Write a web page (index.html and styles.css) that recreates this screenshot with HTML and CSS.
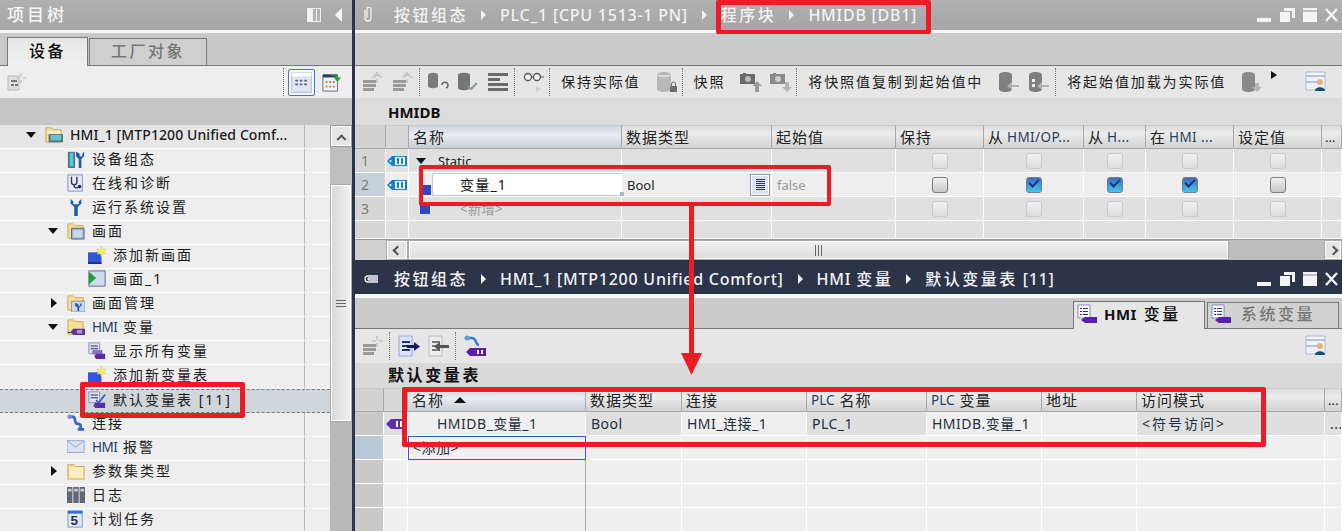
FILE: index.html
```html
<!DOCTYPE html>
<html lang="zh-CN">
<head>
<meta charset="utf-8">
<title>TIA Portal</title>
<link rel="stylesheet" href="styles.css">
</head>
<body>
<svg class="defs" aria-hidden="true">
  <symbol id="folder" viewBox="0 0 20 20"><path d="M1 3h7l2 2h9v14H1z" fill="#f6dc96" stroke="#c9a654"/><path d="M3 6h15v12H3z" fill="#fbeec4"/></symbol>
  <symbol id="folder-hmi" viewBox="0 0 20 20"><path d="M1 2h6l2 2h9v14H1z" fill="#f6dc96" stroke="#c9a654"/><path d="M3 5h14v4H3z" fill="#fbeec4"/><path d="M4 9h16v9H4z" fill="#5d6f80"/><path d="M6 10h12v6H6z" fill="#5fc6d8"/></symbol>
  <symbol id="folder-screen" viewBox="0 0 20 20"><path d="M1 2h6l2 2h9v14H1z" fill="#f6dc96" stroke="#c9a654"/><path d="M5 7h14v12H5z" fill="#9fb4da" stroke="#59647a"/><path d="M7 9h10v8H7z" fill="#c9d6ec"/></symbol>
  <symbol id="folder-wrench" viewBox="0 0 20 20"><path d="M1 2h6l2 2h9v14H1z" fill="#f6dc96" stroke="#c9a654"/><path d="M5 8h15v12H5z" fill="#cdd6e8" stroke="#8492ad"/><path d="M9 10v3l2.500 2v4h2v-4l2.500-2v-3l-1.500 1v2h-2v-2z" fill="#1e5fa8"/></symbol>
  <symbol id="folder-tag" viewBox="0 0 20 20"><path d="M1 2h6l2 2h9v14H1z" fill="#f6dc96" stroke="#c9a654"/><path d="M7 12h13v7H7l-3-3.500z" fill="#5b2f9e"/><path d="M11 14h6v1H11zm0 2h6v1h-6z" fill="#fff"/><path d="M1 16h4" stroke="#222"/></symbol>
  <symbol id="dev-config" viewBox="0 0 20 20"><path d="M1 2h8v18H1z" fill="#5d6f80"/><path d="M3 3h4v15H3z" fill="#3fd2dc"/><path d="M10 2v5l3 3v10h3V10l3-3V2l-2 2v3h-3V4z" fill="#1e5fa8"/></symbol>
  <symbol id="diag" viewBox="0 0 20 20"><path d="M1 1h16v18H1z" fill="#e8ecf8" stroke="#7d88c4"/><path d="M5 3v6a3 3 0 006 0V3M8 12v2a3 3 0 005 0" fill="none" stroke="#26305f" stroke-width="1.500"/><circle cx="14" cy="14" r="2" fill="#26305f"/></symbol>
  <symbol id="wrench" viewBox="0 0 20 20"><path d="M4 1v5l4 4v10h4V10l4-4V1l-3 3v3H7V4z" fill="#1e5fa8"/></symbol>
  <symbol id="add-blue" viewBox="0 0 20 20"><path d="M0 7h15v13H0z" fill="#3257d6"/><path d="M0 18h15v2H0z" fill="#1c2f8f"/><path d="M15 0l1.500 4 3.500-1-2 3.500L20 9l-3.500-.5L15 12l-1.500-3.500L10 9l2-2.500L10 3l3.500 1z" fill="#f7ee5a" stroke="#c9c9a0" stroke-width=".5"/></symbol>
  <symbol id="screen-run" viewBox="0 0 20 20"><path d="M1 1h18v17H1z" fill="#cddaf0" stroke="#59647a"/><path d="M1 2l8 7-8 7z" fill="#1d9c3a"/></symbol>
  <symbol id="all-tags" viewBox="0 0 20 20"><path d="M1 1h12v12H1z" fill="#dfe5f6" stroke="#7d88c4"/><path d="M3 4h8v1H3zm0 3h8v1H3z" fill="#26305f"/><path d="M6 9h10v5H6l-2-2.500z" fill="#8a6cc9"/><path d="M9 13h10v6H9l-2-3z" fill="#5b2f9e"/></symbol>
  <symbol id="tag-table" viewBox="0 0 20 20"><path d="M1 1h12v12H1z" fill="#dfe5f6" stroke="#7d88c4"/><path d="M3 4h8v1H3zm0 3h8v1H3z" fill="#26305f"/><path d="M9 10l3 3 7-9" fill="none" stroke="#3f62c8" stroke-width="2"/><path d="M8 13h11v6H8l-2-3z" fill="#5b2f9e"/></symbol>
  <symbol id="conn" viewBox="0 0 20 20"><path d="M2 3h4c5 0 1 8 6 8 5 0 4 6 0 6h7" fill="none" stroke="#3f62c8" stroke-width="3"/><circle cx="3" cy="3" r="2.500" fill="#6f8ce0"/></symbol>
  <symbol id="mail" viewBox="0 0 20 20"><path d="M0 3h19v13H0z" fill="#dde4f6" stroke="#8ba0d8"/><path d="M0 3l9.500 7L19 3" fill="none" stroke="#8ba0d8"/></symbol>
  <symbol id="logs" viewBox="0 0 20 20"><path d="M0 1h6v18H0zm7 0h6v18H7zm7 0h6v18h-6z" fill="#5f6675"/><path d="M1 3h4v3H1zm7 0h4v3H8zm7 0h4v3h-4z" fill="#c8ccd4"/></symbol>
  <symbol id="sched" viewBox="0 0 20 20"><path d="M1 1h16v18H1z" fill="#dfe7f8" stroke="#7d95d0"/><path d="M1 1h16v3H1z" fill="#2f6fd0"/></symbol>
  <symbol id="newrow" viewBox="0 0 22 22"><path d="M1 9h13v3H1zm0 4h13v3H1zm0 4h11v3H1z" fill="#9a9a9a"/><path d="M15 1v4M15 8v4M10 6h4M17 6h4M12 3l2 2M18 3l-2 2" stroke="#b5b5b5" stroke-width="1.200"/></symbol>
  <symbol id="db-undo" viewBox="0 0 22 22"><path d="M1 4c0-3 10-3 10 0v11c0 3-10 3-10 0z" fill="#7c7c7c"/><path d="M15 14a3 3 0 114 3" fill="none" stroke="#666" stroke-width="1.500"/></symbol>
  <symbol id="db-check" viewBox="0 0 22 22"><path d="M1 4c0-3 12-3 12 0v13c0 3-12 3-12 0z" fill="#757575"/><path d="M11 15l3 3 6-6" fill="none" stroke="#8b9a8b" stroke-width="2"/></symbol>
  <symbol id="lines" viewBox="0 0 22 22"><path d="M1 2h20v3H1zm0 5h12v3H1zm0 5h20v3H1zm0 5h20v3H1z" fill="#6b6b6b"/></symbol>
  <symbol id="glasses" viewBox="0 0 22 22"><circle cx="5" cy="6" r="3.500" fill="#f4f4f4" stroke="#555" stroke-width="1.300"/><circle cx="14" cy="6" r="3.500" fill="#f4f4f4" stroke="#555" stroke-width="1.300"/><path d="M8.500 6h2M17.500 6H21" stroke="#555"/><path d="M13 15l5 3-5 3z" fill="#cfcfcf"/></symbol>
  <symbol id="db-lock" viewBox="0 0 22 22"><path d="M1 4c0-4 14-4 14 0v14c0 4-14 4-14 0z" fill="#b8b8b8"/><path d="M1 4c0 3 14 3 14 0" fill="#ddd"/><path d="M14 15h7v6h-7z" fill="#6e6e6e"/><path d="M15.500 15v-2a2 2 0 014 0v2" fill="none" stroke="#6e6e6e"/></symbol>
  <symbol id="cam-up" viewBox="0 0 22 22"><path d="M0 3h3v-1h3v1h9v10H0z" fill="#6a6a6a"/><circle cx="8" cy="8" r="3" fill="#bbb"/><path d="M17 10l5 5h-3v6h-4v-6h-3z" fill="#9a9a9a"/></symbol>
  <symbol id="cam-down" viewBox="0 0 22 22"><path d="M0 3h3v-1h3v1h9v10H0z" fill="#8a8a8a"/><circle cx="8" cy="8" r="3" fill="#ccc"/><path d="M15 11h4v5h3l-5 5-5-5h3z" fill="#b4b4b4"/></symbol>
  <symbol id="db-left" viewBox="0 0 22 22"><path d="M1 4c0-4 13-4 13 0v14c0 4-13 4-13 0z" fill="#7f7f7f"/><path d="M21 14v2h-7v3l-5-4 5-4v3z" fill="#b0b0b0"/></symbol>
  <symbol id="db-left2" viewBox="0 0 22 22"><path d="M1 4c0-4 13-4 13 0v14c0 4-13 4-13 0z" fill="#7f7f7f"/><path d="M4 8h3v3H4zm0 5h3v3H4z" fill="#eee"/><path d="M21 14v2h-7v3l-5-4 5-4v3z" fill="#b0b0b0"/></symbol>
  <symbol id="db-down" viewBox="0 0 22 22"><path d="M1 4c0-4 13-4 13 0v14c0 4-13 4-13 0z" fill="#8a8a8a"/><path d="M14 12h4v4h3l-5 5-5-5h3z" fill="#b4b4b4"/></symbol>
  <symbol id="custom" viewBox="0 0 22 22"><path d="M1 1h19v18H1z" fill="#eef2fb" stroke="#a9b8dc"/><path d="M1 5h19M1 11h12" stroke="#7d95d0"/><circle cx="15" cy="11" r="3" fill="#e8b27a"/><path d="M10 20c0-5 10-5 10 0z" fill="#14507a"/></symbol>
  <symbol id="tree-new" viewBox="0 0 20 20"><path d="M1 4h11v14H1z" fill="#dedede" stroke="#bbb"/><path d="M4 8h6v2H4zm0 4h3v2H4zm4 0h3v2H8z" fill="#777"/><path d="M14 1v4M14 8v3M10 6h3M16 6h3" stroke="#bbb" stroke-width="1.200"/></symbol>
  <symbol id="tree-list" viewBox="0 0 28 28"><path d="M3 3h22v22H3z" fill="#dfe7f6" stroke="#a7b6d6"/><path d="M3 3h22v4H3z" fill="#fff"/><path d="M7 11h3v2H7zm5 0h3v2h-3zm5 0h3v2h-3zM7 15h3v2H7zm5 0h3v2h-3zm5 0h3v2h-3z" fill="#5a6580"/></symbol>
  <symbol id="tree-sync" viewBox="0 0 22 22"><path d="M1 3h16v18H1z" fill="#eef2fb" stroke="#5a6580"/><path d="M1 3h16v3H1z" fill="#253a6e"/><path d="M4 10h2v2H4zm4 0h2v2H8zm4 0h2v2h-2zM4 15h2v2H4zm4 0h2v2H8zm4 0h2v2h-2z" fill="#c77b2a"/><path d="M10 4c5-3 8-1 8 2h3l-4 5-4-5h3c0-1-2-2-6-2z" fill="#2b9a3c"/></symbol>
  <symbol id="pin" viewBox="0 0 12 16"><path d="M3 3v8a3 3 0 006 0V2a2 2 0 00-4 0v9" fill="none" stroke="#f2f2f2" stroke-width="1.300"/></symbol>
  <symbol id="pin-side" viewBox="0 0 18 12"><path d="M16 3H6a3 3 0 000 6h10M16 5H7a1 1 0 000 2h9" fill="none" stroke="#f2f2f2" stroke-width="1.300"/></symbol>
  <symbol id="wbtns" viewBox="0 0 81 14"><path d="M0 10h14v4H0z" fill="#f4f4f4"/><path d="M23 4h10v10H23z" fill="#f4f4f4"/><path d="M27 0h11v10h-3V3h-8z" fill="#f4f4f4"/><path d="M46 0h14v14H46z" fill="#f4f4f4"/><path d="M46 3h14" stroke="#8a8a8a"/><path d="M69 1l11 12M80 1L69 13" stroke="#f4f4f4" stroke-width="2.400"/></symbol>
  <symbol id="tag-blue" viewBox="0 0 20 12"><path d="M5 1h15v10H5L0 6z" fill="#1083d6"/><path d="M8 2h10v8H8z" fill="#fff"/><path d="M10 3h2v6h-2zm4 0h2v6h-2z" fill="#1083d6"/><circle cx="3.500" cy="6" r="1" fill="#fff"/></symbol>
  <symbol id="tag-purple" viewBox="0 0 20 12"><path d="M5 1h15v10H5L0 6z" fill="#5b2fb0"/><path d="M10 3h2v6h-2zm4 0h2v6h-2z" fill="#fff"/></symbol>
  <symbol id="tab-tags" viewBox="0 0 20 20"><path d="M1 1h12v13H1z" fill="#fff" stroke="#7d88c4"/><path d="M3 4h2v1H3zm3 0h5v1H6zM3 7h2v1H3zm3 0h5v1H6zM3 10h2v1H3zm3 0h5v1H6z" fill="#26305f"/><path d="M8 13h12v6H8l-4-3z" fill="#5b1fb0"/></symbol>
  <symbol id="exp-new" viewBox="0 0 22 22"><path d="M1 9h13v3H1zm0 4h13v3H1zm0 4h11v3H1z" fill="#9a9a9a"/><path d="M15 1v4M15 8v4M10 6h4M17 6h4" stroke="#b5b5b5" stroke-width="1.200"/></symbol>
  <symbol id="export" viewBox="0 0 22 22"><path d="M1 1h13v20H1z" fill="#dbe4fa" stroke="#94a8e0"/><path d="M4 6h8v2H4zm0 4h5v2H4zm0 4h8v2H4z" fill="#28306a"/><path d="M9 10h7V7l6 4.500-6 4.500v-3H9z" fill="#14175a"/></symbol>
  <symbol id="import" viewBox="0 0 22 22"><path d="M1 1h13v20H1z" fill="#ededed" stroke="#bbb"/><path d="M4 6h8v2H4zm0 4h5v2H4zm0 4h8v2H4z" fill="#777"/><path d="M21 10h-9V7l-6 4.500 6 4.500v-3h9z" fill="#555"/></symbol>
  <symbol id="conn-tag" viewBox="0 0 22 22"><path d="M2 3h6c5 0 3 7 7 7" fill="none" stroke="#3f7fd8" stroke-width="2.600"/><circle cx="3" cy="3" r="2.500" fill="#5f9ce8"/><path d="M6 13h16v8H6l-4-4z" fill="#5b1fb0"/><path d="M13 15h2v4h-2zm4 0h2v4h-2z" fill="#fff"/></symbol>
</svg>

<div class="app">
  <aside class="left">
    <div class="title"><span class="title-text">项目树</span><span class="title-tools"><span class="panel-ic"><i></i><i></i><i></i></span><span class="tri-left"></span></span></div>
    <div class="strip"></div>
    <div class="tabs">
      <span class="tab tab-on">设备</span>
      <span class="tab tab-off">工厂对象</span>
    </div>
    <div class="left-tools">
      <svg class="ic20"><use href="#tree-new"/></svg>
      <span class="sep"></span>
      <span class="tool-on"><svg class="ic26"><use href="#tree-list"/></svg></span>
      <svg class="ic20"><use href="#tree-sync"/></svg>
    </div>
    <div class="left-gap"></div>
    <div class="tree-wrap">
      <div class="tree">
        <div class="row l0 strong"><span class="slot"><b class="down"></b></span><svg class="ic18"><use href="#folder-hmi"/></svg><span class="lat">HMI_1 [MTP1200 Unified Comf...</span></div>
        <div class="row l1"><span class="slot"></span><svg class="ic18"><use href="#dev-config"/></svg><span>设备组态</span></div>
        <div class="row l1"><span class="slot"></span><svg class="ic18"><use href="#diag"/></svg><span>在线和诊断</span></div>
        <div class="row l1"><span class="slot"></span><svg class="ic18"><use href="#wrench"/></svg><span>运行系统设置</span></div>
        <div class="row l1"><span class="slot"><b class="down"></b></span><svg class="ic18"><use href="#folder-screen"/></svg><span>画面</span></div>
        <div class="row l2"><span class="slot"></span><svg class="ic18"><use href="#add-blue"/></svg><span>添加新画面</span></div>
        <div class="row l2"><span class="slot"></span><svg class="ic18"><use href="#screen-run"/></svg><span>画面_1</span></div>
        <div class="row l1"><span class="slot"><b class="rt"></b></span><svg class="ic18"><use href="#folder-wrench"/></svg><span>画面管理</span></div>
        <div class="row l1"><span class="slot"><b class="down"></b></span><svg class="ic18"><use href="#folder-tag"/></svg><span><span class="hmi">HMI</span> 变量</span></div>
        <div class="row l2"><span class="slot"></span><svg class="ic18"><use href="#all-tags"/></svg><span>显示所有变量</span></div>
        <div class="row l2"><span class="slot"></span><svg class="ic18"><use href="#add-blue"/></svg><span>添加新变量表</span></div>
        <div class="row l2 selected"><span class="slot"></span><svg class="ic18"><use href="#tag-table"/></svg><span>默认变量表 [11]</span></div>
        <div class="row l1"><span class="slot"></span><svg class="ic18"><use href="#conn"/></svg><span>连接</span></div>
        <div class="row l1"><span class="slot"></span><svg class="ic18"><use href="#mail"/></svg><span><span class="hmi">HMI</span> 报警</span></div>
        <div class="row l1"><span class="slot"><b class="rt"></b></span><svg class="ic18"><use href="#folder"/></svg><span>参数集类型</span></div>
        <div class="row l1"><span class="slot"></span><svg class="ic18"><use href="#logs"/></svg><span>日志</span></div>
        <div class="row l1"><span class="slot"></span><svg class="ic18" viewBox="0 0 20 20"><use href="#sched"/><text x="9" y="17" text-anchor="middle" class="num">5</text></svg><span>计划任务</span></div>
      </div>
      <div class="vbar">
        <div class="vbtn"><b class="chev-up"></b></div>
        <div class="vtrack"></div>
        <div class="vthumb"><i></i></div>
        <div class="vrest"></div>
      </div>
    </div>
  </aside>

  <main class="main">
    <section class="pane-top">
      <div class="crumb crumb-gray">
        <svg class="pin"><use href="#pin"/></svg>
        <span class="zh">按钮组态</span><b class="sp"></b>
        <span class="en">PLC_1 [CPU 1513-1 PN]</span><b class="sp"></b>
        <span class="zh">程序块</span><b class="sp"></b>
        <span class="en">HMIDB [DB1]</span>
        <svg class="wbtns"><use href="#wbtns"/></svg>
      </div>
      <div class="strip"></div>
      <div class="tabband"></div>
      <div class="tools">
        <svg class="ic22 m0"><use href="#newrow"/></svg>
        <svg class="ic22 m8"><use href="#newrow"/></svg>
        <span class="sep m5"></span>
        <svg class="ic22 m7"><use href="#db-undo"/></svg>
        <svg class="ic22 m8"><use href="#db-check"/></svg>
        <svg class="ic22 m8"><use href="#lines"/></svg>
        <span class="sep m5"></span>
        <svg class="ic22 m8"><use href="#glasses"/></svg>
        <span class="sep m4"></span>
        <span class="tool-text m11">保持实际值</span>
        <svg class="ic22 m16"><use href="#db-lock"/></svg>
        <span class="sep m4"></span>
        <span class="tool-text m11">快照</span>
        <svg class="ic22 m16"><use href="#cam-up"/></svg>
        <svg class="ic22 m8"><use href="#cam-down"/></svg>
        <span class="sep m4"></span>
        <span class="tool-text m11">将快照值复制到起始值中</span>
        <svg class="ic22 m16"><use href="#db-left"/></svg>
        <svg class="ic22 m8"><use href="#db-left2"/></svg>
        <span class="sep m5"></span>
        <span class="tool-text m11">将起始值加载为实际值</span>
        <svg class="ic22 m16"><use href="#db-down"/></svg>
        <b class="more"></b>
        <svg class="ic22 push"><use href="#custom"/></svg>
      </div>
      <div class="heading">HMIDB</div>
      <div class="grid-top">
        <div class="gr gr-top gh">
          <span class="c"></span><span class="c"></span><span class="c c-name-h">名称</span><span class="c">数据类型</span><span class="c">起始值</span><span class="c">保持</span><span class="c">从 <em>HMI/OP...</em></span><span class="c">从 <em>H...</em></span><span class="c">在 <em>HMI ...</em></span><span class="c">设定值</span><span class="c">...</span>
        </div>
        <div class="gr gr-top dim">
          <span class="c no">1</span><span class="c ctr"><svg class="tag"><use href="#tag-blue"/></svg></span>
          <span class="c static"><b class="down"></b><span class="lat-cell">Static</span></span><span class="c"></span><span class="c"></span>
          <span class="c ctr"><i class="cb off"></i></span><span class="c ctr"><i class="cb off"></i></span><span class="c ctr"><i class="cb off"></i></span><span class="c ctr"><i class="cb off"></i></span><span class="c ctr"><i class="cb off"></i></span><span class="c"></span>
        </div>
        <div class="gr gr-top active">
          <span class="c no cur">2</span><span class="c ctr"><svg class="tag"><use href="#tag-blue"/></svg></span>
          <span class="c namecell"><i class="sq"></i><span class="input">变量_1<i class="handle"></i></span></span>
          <span class="c typecell"><span class="lat-cell">Bool</span><span class="listbtn"><i></i></span></span>
          <span class="c lat-cell grey">false</span>
          <span class="c ctr"><i class="cb"></i></span><span class="c ctr"><i class="cb on"></i></span><span class="c ctr"><i class="cb on"></i></span><span class="c ctr"><i class="cb on"></i></span><span class="c ctr"><i class="cb"></i></span><span class="c"></span>
        </div>
        <div class="gr gr-top dim">
          <span class="c no">3</span><span class="c"></span>
          <span class="c addcell"><i class="sq sq2"></i><span class="grey">&lt;新增&gt;</span></span><span class="c"></span><span class="c"></span>
          <span class="c ctr"><i class="cb off"></i></span><span class="c ctr"><i class="cb off"></i></span><span class="c ctr"><i class="cb off"></i></span><span class="c ctr"><i class="cb off"></i></span><span class="c ctr"><i class="cb off"></i></span><span class="c"></span>
        </div>
        <div class="gr gr-top dim filler">
          <span class="c no"></span><span class="c"></span><span class="c"></span><span class="c"></span><span class="c"></span><span class="c"></span><span class="c"></span><span class="c"></span><span class="c"></span><span class="c"></span><span class="c"></span>
        </div>
      </div>
      <div class="hbar">
        <span class="hblank"></span>
        <span class="hbtn"><b class="chev-l"></b></span>
        <span class="hthumb"><i></i></span>
        <span class="hrest"></span>
        <span class="hbtn hbtn-r"><b class="chev-r"></b></span>
      </div>
    </section>

    <section class="pane-bottom">
      <div class="crumb crumb-dark">
        <svg class="pin pin-s"><use href="#pin-side"/></svg>
        <span class="zh">按钮组态</span><b class="sp"></b>
        <span class="en">HMI_1 [MTP1200 Unified Comfort]</span><b class="sp"></b>
        <span class="en">HMI</span><span class="zh zh-tight">变量</span><b class="sp"></b>
        <span class="zh">默认变量表</span><span class="en en-tight">[11]</span>
        <svg class="wbtns"><use href="#wbtns"/></svg>
      </div>
      <div class="strip strip-b"></div>
      <div class="tabband tabband-b">
        <span class="dtab dtab-on"><svg class="ic20"><use href="#tab-tags"/></svg><span class="dtab-t"><span class="en-b">HMI</span> 变量</span></span>
        <span class="dtab dtab-off"><svg class="ic20"><use href="#tab-tags"/></svg><span class="dtab-t dtab-t2">系统变量</span></span>
      </div>
      <div class="tools tools-b">
        <svg class="ic22 m0"><use href="#exp-new"/></svg>
        <span class="sep m5"></span>
        <svg class="ic22 m8"><use href="#export"/></svg>
        <svg class="ic22 m8"><use href="#import"/></svg>
        <span class="sep m5"></span>
        <svg class="ic22 m8"><use href="#conn-tag"/></svg>
        <svg class="ic22 push"><use href="#custom"/></svg>
      </div>
      <div class="heading heading-b">默认变量表</div>
      <div class="grid-bottom">
        <div class="gr gr-bot gh">
          <span class="c"></span><span class="c"></span><span class="c c-name-h">名称 <b class="sort"></b></span><span class="c">数据类型</span><span class="c">连接</span><span class="c"><em class="em-l">PLC</em>名称</span><span class="c"><em class="em-l">PLC</em>变量</span><span class="c">地址</span><span class="c">访问模式</span><span class="c">...</span>
        </div>
        <div class="gr gr-bot lines">
          <span class="c no2"></span><span class="c ctr"><svg class="tag"><use href="#tag-purple"/></svg></span>
          <span class="c lit indent">HMIDB_变量_1</span><span class="c">Bool</span><span class="c lit">HMI_连接_1</span><span class="c">PLC_1</span><span class="c lit">HMIDB.变量_1</span><span class="c lit"></span><span class="c wide">&lt;符号访问&gt;</span><span class="c">...</span>
        </div>
        <div class="gr gr-bot lines plain">
          <span class="c no2 cur"></span><span class="c"></span>
          <span class="c addbox">&lt;添加&gt;</span><span class="c"></span><span class="c"></span><span class="c"></span><span class="c"></span><span class="c"></span><span class="c"></span><span class="c"></span>
        </div>
        <div class="gr gr-bot lines plain">
          <span class="c no2"></span><span class="c"></span><span class="c"></span><span class="c"></span><span class="c"></span><span class="c"></span><span class="c"></span><span class="c"></span><span class="c"></span><span class="c"></span>
        </div>
        <div class="gr gr-bot lines plain">
          <span class="c no2"></span><span class="c"></span><span class="c"></span><span class="c"></span><span class="c"></span><span class="c"></span><span class="c"></span><span class="c"></span><span class="c"></span><span class="c"></span>
        </div>
        <div class="gr gr-bot lines plain">
          <span class="c no2"></span><span class="c"></span><span class="c"></span><span class="c"></span><span class="c"></span><span class="c"></span><span class="c"></span><span class="c"></span><span class="c"></span><span class="c"></span>
        </div>
      </div>
    </section>
  </main>

  <div class="mark mark-crumb"></div>
  <div class="mark mark-row"></div>
  <div class="mark mark-table"></div>
  <div class="mark mark-tree"></div>
  <svg class="arrow" aria-hidden="true"><path d="M8 0h5v147h8l-10.500 22L0 147h8z" fill="#ed1c24"/></svg>
</div>
</body>
</html>
```
FILE: styles.css
```css
* { box-sizing: border-box; }
html, body { margin: 0; height: 100%; overflow: hidden; }
body {
  font-family: "Noto Sans", "Noto Sans CJK SC", sans-serif;
  font-size: 14px;
  color: #1c1c1c;
  background: #eee;
}
.defs { position: absolute; width: 0; height: 0; }
.num { font: 700 15px "Liberation Sans", sans-serif; fill: #26305f; }
svg { display: block; flex: none; }
em { font-style: normal; }
.app { position: relative; display: flex; width: 1342px; height: 531px; overflow: hidden; }

/* left panel */
.left { width: 355px; flex: none; border-right: 3px solid #2c3449; height: 531px; overflow: hidden; background: #eee; }
.title { height: 30px; background: linear-gradient(#b0b0b0, #a6a6a6); display: flex; align-items: center; justify-content: space-between; padding: 0 3px 0 7px; }
.title-text { color: #f5f5f5; font-size: 17px; letter-spacing: 3px; font-weight: 500; line-height: 24px; }
.title-tools { display: flex; align-items: center; gap: 14px; padding-right: 7px; }
.panel-ic { display: flex; width: 14px; height: 14px; background: #eee; padding: 1px; gap: 1px; }
.panel-ic i { flex: 1; background: #b4b4b4; }
.panel-ic i:first-child { background: #f4f4f4; flex: 1.500; }
.tri-left { width: 0; height: 0; border: 7px solid transparent; border-left-width: 0; border-right: 7px solid #f4f4f4; }
.strip { height: 3px; background: #f6f6f6; }
.tabs { height: 33px; background: #c9c9c9; border-bottom: 1px solid #777; display: flex; align-items: flex-end; padding-left: 7px; gap: 1px; }
.tab { height: 28px; margin-bottom: -1px; padding-bottom: 3px; border: 1px solid #777; border-bottom: 0; font-size: 16px; letter-spacing: 2.500px; line-height: 22px; display: flex; align-items: center; justify-content: center; font-weight: 500; }
.tab-on { width: 81px; background: linear-gradient(#e6e6e6, #f0f0f0); color: #111; height: 29px; }
.tab-off { width: 118px; background: #cfcfcf; color: #777; border-bottom: 1px solid #777; }
.left-tools { height: 32px; background: #eeeeee; display: flex; align-items: center; padding: 0 10px 0 7px; }
.left-tools .sep { margin-left: auto; margin-right: 4px; }
.left-tools .ic20 { width: 20px; height: 20px; }
.left-tools .ic20:last-child { margin-left: 7px; }
.tool-on { width: 27px; height: 27px; border: 1px solid #3b78d8; background: #f7f7f7; display: flex; align-items: center; justify-content: center; border-radius: 2px; }
.ic26 { width: 25px; height: 25px; }
.left-gap { height: 27px; background: #c6c6c6; }
.tree-wrap { display: flex; height: 406px; }
.tree { width: 330px; flex: none; background: linear-gradient(90deg, #eee 304px, #b8b8b8 304px, #b8b8b8 305px, #eee 305px); }
.row { height: 24px; display: flex; align-items: center; padding-bottom: 3px; border-bottom: 1px solid #fff; letter-spacing: 2px; line-height: 20px; white-space: nowrap; }
.row span { line-height: 20px; }
.row .slot { width: 19px; flex: none; display: flex; align-items: center; }
.row .ic18 { width: 18px; height: 18px; margin-right: 7px; }
.l0 { padding-left: 26px; }
.l1 { padding-left: 48px; }
.l2 { padding-left: 69px; }
.strong { background: linear-gradient(90deg, #e6e6e6 304px, #b8b8b8 304px, #b8b8b8 305px, #e6e6e6 305px); }
.lat { font-size: 14px; font-weight: 500; letter-spacing: 0.100px; }
.hmi { letter-spacing: -0.500px; color: #23405f; font-size: 13.500px; }
.selected { background: #d1d6da; border-top: 1px dashed #777; border-bottom: 1px dashed #777; }
.down { display: block; width: 0; height: 0; border: 5px solid transparent; border-top: 6px solid #111; border-bottom: 0; }
.rt { display: block; width: 0; height: 0; margin-left: 3px; border: 5.500px solid transparent; border-left: 6px solid #111; border-right: 0; }
.vbar { width: 22px; flex: none; background: #bdbdbd; display: flex; flex-direction: column; }
.vbtn { height: 22px; border: 1px solid #999; background: #e6e6e6; box-shadow: inset 0 0 0 1px #fff; display: flex; align-items: center; justify-content: center; }
.chev-up { width: 7px; height: 7px; border-left: 2px solid #555; border-top: 2px solid #555; transform: rotate(45deg) translate(2px, 2px); }
.vtrack { height: 37px; background: #bfbfbf; }
.vthumb { height: 238px; background: linear-gradient(90deg, #d8d8d8, #f2f2f2); border: 1px solid #aaa; box-shadow: inset 0 0 0 1px #fff; display: flex; align-items: center; justify-content: center; }
.vthumb i { width: 10px; height: 7px; border-top: 1px solid #666; border-bottom: 1px solid #666; background: linear-gradient(#666, #666) center / 100% 1px no-repeat; }
.vrest { flex: 1; background: #b9b9b9; }

/* right panes */
.main { flex: 1; min-width: 0; height: 531px; overflow: hidden; background: #eee; }
.crumb { display: flex; align-items: center; gap: 14px; color: #f2f2f2; white-space: nowrap; padding-left: 7px; }
.crumb-gray { height: 30px; background: linear-gradient(#b0b0b0, #a6a6a6); }
.crumb-dark { height: 34px; padding-top: 4px; background: #2c3449; }
.pin { width: 12px; height: 16px; margin-right: 6px; }
.pin-s { width: 18px; height: 12px; margin-right: 0; }
.zh { font-size: 16px; letter-spacing: 2.500px; font-weight: 500; margin-right: -1px; line-height: 24px; }
.en { font-size: 16px; font-weight: 500; letter-spacing: 0.750px; line-height: 24px; }
.zh-tight { margin-left: -9px; }
.en-tight { margin-left: -8px; }
.sp { width: 0; height: 0; flex: none; border: 5px solid transparent; border-left: 5px solid #f2f2f2; border-right: 0; }
.wbtns { width: 81px; height: 14px; margin-left: auto; margin-right: 4px; }
.tabband { height: 33px; background: #cbcbcb; border-bottom: 1px solid #777; }
.tools { height: 32px; background: #e6e6e6; display: flex; align-items: center; padding-left: 7px; padding-right: 15px; }
.tool-text { font-size: 14px; letter-spacing: 1.900px; white-space: nowrap; line-height: 20px; }
.ic22 { width: 22px; height: 22px; }
.ic20 { width: 20px; height: 20px; }
.sep { width: 1px; height: 28px; flex: none; border-left: 1px dotted #777; }
.m0 { margin-left: 0; }
.m4 { margin-left: 4px; }
.m5 { margin-left: 5px; }
.m7 { margin-left: 7px; }
.m8 { margin-left: 8px; }
.m11 { margin-left: 11px; }
.m16 { margin-left: 15px; }
.push { margin-left: auto; }
.more { align-self: flex-start; margin: 5px 0 0 8px; width: 0; height: 0; border: 4px solid transparent; border-left: 6px solid #111; border-right: 0; }
.heading { height: 27px; background: #dcdcdc; padding-left: 33px; display: flex; align-items: center; font-weight: 700; font-size: 15px; color: #111; }
.heading-b { height: 25px; padding-bottom: 3px; font-size: 16px; letter-spacing: 2.600px; background: #d9d9d9; }

/* grids */
.gr { display: grid; height: 24px; }
.gr-top { grid-template-columns: 31px 23px 213px 150px 124px 88px 100px 62px 88px 88px 20px; }
.gr-bot { grid-template-columns: 29px 24px 178px 96px 125px 120px 115px 95px 188px 17px; }
.c { display: flex; align-items: center; padding-left: 5px; border-right: 1px solid #fff; border-bottom: 1px solid #fff; white-space: nowrap; overflow: hidden; min-width: 0; position: relative; font-size: 13.500px; line-height: 20px; }
.gh { background: linear-gradient(#dadada, #ececec 35%, #d0d0d0); }
.gh .c { padding-left: 4px; padding-bottom: 1px; border-right: 1px solid #a9a9a9; border-bottom: 1px solid #a9a9a9; border-top: 1px solid #c9c9c9; font-size: 15px; letter-spacing: 1px; color: #222; }
.grid-bottom .gh .c:last-child, .gh .c:last-child { padding-left: 3px; letter-spacing: 0; font-size: 13px; }
.gh em { font-size: 13.500px; letter-spacing: 0.400px; color: #27425f; margin-left: 3px; }
.gh em.em-l { margin-left: 0; margin-right: 5px; font-size: 13.500px; letter-spacing: 0; }
.gh .c:first-child { background: #d2d2d2; }
.gh .c:nth-child(2) { background: #d8d8d8; }
.c-name-h { background: linear-gradient(#cdd5de, #eaedf1 40%, #c8ced5); }
.dim { background: #e0e0e0; }
.active { background: #eeeeee; }
.no { background: #d6d6d6; color: #7a7a7a; padding-left: 6px; font-size: 14px; }
.cur { background: #c5d0da; }
.no2 { background: #c9c9c9; }
.no2.cur { background: #b9c9d6; }
.ctr { justify-content: center; padding-left: 0; }
.tag { width: 20px; height: 12px; }
.static { padding-left: 7px; }
.static .down { margin-right: 12px; }
.lat-cell { font-size: 13px; color: #222; }
.namecell { padding: 0 0 0 14px; border-right: 0; overflow: visible; }
.input { position: relative; margin-left: 1px; width: 190px; height: 23px; background: #fff; border: 1px solid #bcd; border-right: 0; padding-left: 27px; display: flex; align-items: center; color: #111; font-size: 14px; letter-spacing: 1.200px; }
.handle { position: absolute; right: -2px; bottom: -1px; width: 4px; height: 4px; background: #a9b8c8; }
.sq { width: 8px; height: 10px; flex: none; background: #2f48c0; align-self: flex-end; margin-bottom: 1px; }
.sq2 { width: 10px; height: 10px; margin: 0 30px 0 11px; align-self: center; }
.addcell { padding-left: 0; }
.grey { color: #9a9a9a; }
.typecell { justify-content: space-between; padding-right: 1px; }
.listbtn { width: 20px; height: 22px; background: #dce3f2; border: 1px solid #8b93ad; display: flex; align-items: center; justify-content: center; box-shadow: inset 0 0 0 1px #fff; }
.listbtn i { display: block; width: 9px; height: 11px; background: repeating-linear-gradient(#2a3270 0, #2a3270 1px, #dce3f2 1px, #dce3f2 2px); }
.cb { display: block; width: 16px; height: 16px; border-radius: 3px; border: 1.500px solid #7f7f7f; background: linear-gradient(#f0f0f0, #c8c8c8); }
.cb.off { border-color: #c9c9c9; background: linear-gradient(#f0f0f0, #dedede); }
.cb.on { border-color: #6f7f90; background: linear-gradient(#3d6cc0, #46c6ec); position: relative; }
.cb.on::after { content: ""; position: absolute; left: 2.500px; top: 1.500px; width: 8px; height: 4px; border-left: 2.500px solid #123a80; border-bottom: 2.500px solid #123a80; transform: rotate(-45deg); }
.filler { height: 18px; }
.hbar { height: 21px; display: flex; background: #bfbfbf; border-top: 1px solid #999; }
.hblank { width: 31px; background: #d0d0d0; }
.hbtn { width: 22px; background: #e4e4e4; border: 1px solid #aaa; box-shadow: inset 0 0 0 1px #fff; display: flex; align-items: center; justify-content: center; }
.hbtn-r { width: 18px; }
.chev-l, .chev-r { width: 7px; height: 7px; border-left: 2px solid #555; border-bottom: 2px solid #555; transform: rotate(45deg); }
.chev-r { transform: rotate(-135deg); }
.hthumb { width: 821px; background: linear-gradient(#f0f0f0, #dedede); border: 1px solid #aaa; box-shadow: inset 0 0 0 1px #fff; display: flex; align-items: center; justify-content: center; }
.hthumb i { width: 7px; height: 11px; border-left: 1px solid #666; border-right: 1px solid #666; background: linear-gradient(#666, #666) center / 1px 100% no-repeat; }
.hrest { width: 95px; background: #bdbdbd; }
.strip-b { height: 4px; }
.tabband-b { height: 31px; display: flex; justify-content: flex-end; align-items: flex-end; gap: 2px; padding-right: 3px; }
.dtab { height: 27px; margin-bottom: -1px; padding-bottom: 3px; width: 132px; border: 1px solid #777; display: flex; align-items: center; padding-left: 3px; font-size: 16px; letter-spacing: 2.500px; font-weight: 500; line-height: 22px; }
.dtab-on { background: #e6e6e6; border-bottom: 0; color: #111; height: 28px; }
.dtab-off { background: #d2d2d2; color: #777; }
.dtab-t { margin-left: 7px; }
.dtab-t2 { margin-left: 10px; }
.en-b { font-size: 15px; font-weight: 700; letter-spacing: 0.500px; }
.tools-b { height: 34px; }
.grid-bottom .c { font-size: 14px; letter-spacing: 0.500px; color: #1f2f40; }
.grid-bottom .c.wide { letter-spacing: 2px; }
.grid-bottom .gh .c { font-size: 15px; letter-spacing: 1px; color: #222; }
.grid-bottom .gh .c:last-child { font-size: 13px; letter-spacing: 0; }
.lines { background: #dfdfdf; }
.lit { background: #efefef; }
.indent { padding-left: 29px; }
.plain { background: #efefef; }
.plain .c:nth-child(3) { border-right: 1px solid #aaa; }
.addbox { border: 1px solid #2f5fc8 !important; padding-left: 4px; overflow: hidden; background: #efefef; }
.sort { display: inline-block; width: 0; height: 0; margin-left: 10px; border: 6px solid transparent; border-bottom: 6px solid #111; border-top: 0; }

/* red callouts */
.mark { position: absolute; border: 4px solid #ed1c24; border-radius: 2px; pointer-events: none; }
.mark-crumb { left: 716px; top: 0; width: 215px; height: 34px; border-width: 5px 5px 4px; }
.mark-row { left: 419px; top: 165px; width: 412px; height: 41px; }
.mark-table { left: 402px; top: 387px; width: 864px; height: 60px; border-width: 5px; }
.mark-tree { left: 80px; top: 382px; width: 165px; height: 36px; border-width: 5px; }
.arrow { position: absolute; left: 681px; top: 206px; width: 21px; height: 169px; }
```
